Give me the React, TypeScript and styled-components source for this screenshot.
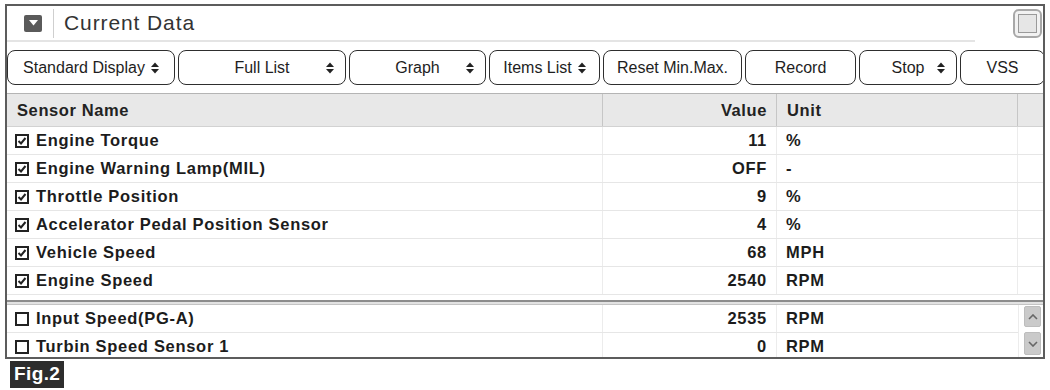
import styled, { createGlobalStyle } from "styled-components";

type Sensor = {
  name: string;
  value: string;
  unit: string;
  checked: boolean;
};

type Tool = {
  label: string;
  width: number;
  kind: "plain" | "inline" | "spread";
};

const tools: Tool[] = [
  { label: "Standard Display", width: 168, kind: "inline" },
  { label: "Full List", width: 168, kind: "spread" },
  { label: "Graph", width: 137, kind: "spread" },
  { label: "Items List", width: 111, kind: "inline" },
  { label: "Reset Min.Max.", width: 139, kind: "plain" },
  { label: "Record", width: 111, kind: "plain" },
  { label: "Stop", width: 98, kind: "spread" },
  { label: "VSS", width: 85, kind: "plain" },
];

const pinned: Sensor[] = [
  { name: "Engine Torque", value: "11", unit: "%", checked: true },
  { name: "Engine Warning Lamp(MIL)", value: "OFF", unit: "-", checked: true },
  { name: "Throttle Position", value: "9", unit: "%", checked: true },
  { name: "Accelerator Pedal Position Sensor", value: "4", unit: "%", checked: true },
  { name: "Vehicle Speed", value: "68", unit: "MPH", checked: true },
  { name: "Engine Speed", value: "2540", unit: "RPM", checked: true },
];

const others: Sensor[] = [
  { name: "Input Speed(PG-A)", value: "2535", unit: "RPM", checked: false },
  { name: "Turbin Speed Sensor 1", value: "0", unit: "RPM", checked: false },
];

const COLS = "596px 174px 241px 1fr";

const GlobalStyle = createGlobalStyle`
  * { box-sizing: border-box; }
  body {
    margin: 0;
    background: #fff;
    color: #222;
    font-family: "Liberation Sans", Arial, sans-serif;
  }
`;

const Page = styled.div`
  padding: 4px 0 0 5px;
`;

const Window = styled.div`
  width: 1040px;
  border: 2px solid #5c5c5c;
  display: flex;
  flex-direction: column;
`;

const TitleBar = styled.div`
  display: flex;
  align-items: flex-start;
  gap: 38px;
  height: 36px;
  padding-right: 1px;
`;

const TitleMain = styled.div`
  flex: 1;
  height: 36px;
  display: flex;
  align-items: center;
  border-bottom: 2px solid #e4e4e4;
  padding-left: 17px;
`;

const CollapseIcon = styled.div`
  width: 18px;
  height: 17px;
  background: #5a5a5a;
  border-radius: 2px;
  display: flex;
  align-items: center;
  justify-content: center;
`;

const TitleDivider = styled.div`
  width: 1px;
  height: 29px;
  background: #cfcfcf;
  margin: 0 10px 0 11px;
`;

const TitleText = styled.div`
  font-size: 21px;
  letter-spacing: 0.9px;
  color: #333;
`;

const MaxButton = styled.div`
  width: 29px;
  height: 29px;
  margin-top: 3px;
  border: 2px solid #a8a8a8;
  border-radius: 6px;
  padding: 3px;
  background: #f2f2f2;
`;

const MaxInner = styled.div`
  width: 100%;
  height: 100%;
  border: 1px solid #9a9a9a;
  background: #e6e6e6;
`;

const Toolbar = styled.div`
  display: flex;
  gap: 3px;
  padding: 8px 0;
  overflow: hidden;
`;

const ToolButton = styled.div<{ $w: number; $kind: Tool["kind"] }>`
  flex: none;
  width: ${(p) => p.$w}px;
  height: 35px;
  border: 1.5px solid #2e2e2e;
  border-radius: 8px;
  background: #fff;
  font-size: 16px;
  color: #1e1e1e;
  white-space: nowrap;
  align-items: center;
  ${(p) =>
    p.$kind === "spread"
      ? `display: grid; grid-template-columns: 1fr auto 1fr; padding: 0 11px;`
      : `display: flex; justify-content: center; gap: 6px;`}
`;

const SpinSlot = styled.span`
  justify-self: end;
  display: flex;
`;

const Table = styled.div`
  border-top: 1px solid #b4b4b4;
`;

const HeaderRow = styled.div`
  display: grid;
  grid-template-columns: ${COLS};
  height: 33px;
  background: #e8e8e8;
  border-bottom: 1px solid #d2d2d2;
`;

const HeadCell = styled.div<{ $align?: "left" | "right" }>`
  display: flex;
  align-items: center;
  justify-content: ${(p) => (p.$align === "right" ? "flex-end" : "flex-start")};
  padding: 0 9px 0 ${(p) => (p.$align === "right" ? "0" : "10px")};
  border-right: 1px solid #c6c6c6;
  font-weight: bold;
  font-size: 16.5px;
  letter-spacing: 0.6px;
  &:last-child { border-right: none; }
`;

const TopPane = styled.div`
  height: 173px;
`;

const PaneSplit = styled.div`
  height: 5px;
  border-top: 2px solid #8c8c8c;
  background: #e2e2e2;
  border-bottom: 1px solid #c4c4c4;
`;

const BottomPane = styled.div`
  height: 52px;
  display: flex;
  overflow: hidden;
`;

const BottomRows = styled.div`
  width: 1011px;
`;

const DataRow = styled.div<{ $cols: string }>`
  display: grid;
  grid-template-columns: ${(p) => p.$cols};
  height: 28px;
  border-bottom: 1px solid #e6e6e6;
`;

const Cell = styled.div<{ $align?: "left" | "right" }>`
  display: flex;
  align-items: center;
  justify-content: ${(p) => (p.$align === "right" ? "flex-end" : "flex-start")};
  padding: 0 9px 0 ${(p) => (p.$align === "right" ? "0" : "9px")};
  border-right: 1px solid #ececec;
  font-weight: bold;
  font-size: 16.5px;
  letter-spacing: 0.7px;
  color: #1c1c1c;
  white-space: nowrap;
  &:last-child { border-right: none; }
`;

const NameCell = styled(Cell)`
  padding-left: 8px;
  gap: 7px;
`;

const CheckBox = styled.span`
  width: 14px;
  height: 14px;
  border: 2px solid #222;
  display: flex;
  align-items: center;
  justify-content: center;
  flex: none;
`;

const ScrollCol = styled.div`
  flex: 1;
  border-left: 1px solid #ececec;
  display: flex;
  flex-direction: column;
  gap: 5px;
  padding: 1px 2px 0 5px;
`;

const ScrollButton = styled.div<{ $h: number }>`
  height: ${(p) => p.$h}px;
  background: #cacaca;
  border: 1px solid #bdbdbd;
  border-radius: 2px;
  display: flex;
  align-items: center;
  justify-content: center;
`;

const FigLabel = styled.div`
  display: inline-block;
  margin: 2px 0 0 5px;
  padding: 2px 4px 0;
  height: 27px;
  background: #2d2d2d;
  color: #fff;
  font-weight: bold;
  font-size: 19px;
  letter-spacing: 0.4px;
`;

const SpinArrows = () => (
  <svg width="8" height="12" viewBox="0 0 8 12">
    <polygon points="0,5 4,0.5 8,5" fill="#222" />
    <polygon points="0,7 4,11.5 8,7" fill="#222" />
  </svg>
);

const Check = () => (
  <svg width="10" height="10" viewBox="0 0 10 10">
    <polyline points="1.5,5 4,7.5 8.5,2" fill="none" stroke="#222" strokeWidth="2" />
  </svg>
);

const SensorRow = ({ s, cols }: { s: Sensor; cols: string }) => (
  <DataRow $cols={cols}>
    <NameCell>
      <CheckBox>{s.checked && <Check />}</CheckBox>
      {s.name}
    </NameCell>
    <Cell $align="right">{s.value}</Cell>
    <Cell>{s.unit}</Cell>
    {cols === COLS && <Cell />}
  </DataRow>
);

const App = () => {
  return (
    <Page>
      <GlobalStyle />
      <Window>
        <TitleBar>
          <TitleMain>
            <CollapseIcon>
              <svg width="9" height="6" viewBox="0 0 9 6">
                <polygon points="0,0 9,0 4.5,5.5" fill="#fff" />
              </svg>
            </CollapseIcon>
            <TitleDivider />
            <TitleText>Current Data</TitleText>
          </TitleMain>
          <MaxButton>
            <MaxInner />
          </MaxButton>
        </TitleBar>

        <Toolbar>
          {tools.map((t) => (
            <ToolButton key={t.label} $w={t.width} $kind={t.kind}>
              {t.kind === "spread" && <span />}
              <span>{t.label}</span>
              {t.kind === "inline" && <SpinArrows />}
              {t.kind === "spread" && (
                <SpinSlot>
                  <SpinArrows />
                </SpinSlot>
              )}
            </ToolButton>
          ))}
        </Toolbar>

        <Table>
          <HeaderRow>
            <HeadCell>Sensor Name</HeadCell>
            <HeadCell $align="right">Value</HeadCell>
            <HeadCell>Unit</HeadCell>
            <HeadCell />
          </HeaderRow>
          <TopPane>
            {pinned.map((s) => (
              <SensorRow key={s.name} s={s} cols={COLS} />
            ))}
          </TopPane>
          <PaneSplit />
          <BottomPane>
            <BottomRows>
              {others.map((s) => (
                <SensorRow key={s.name} s={s} cols="596px 174px 241px" />
              ))}
            </BottomRows>
            <ScrollCol>
              <ScrollButton $h={21}>
                <svg width="10" height="6" viewBox="0 0 10 6">
                  <polyline points="1,5 5,1 9,5" fill="none" stroke="#666" strokeWidth="1.6" />
                </svg>
              </ScrollButton>
              <ScrollButton $h={23}>
                <svg width="10" height="6" viewBox="0 0 10 6">
                  <polyline points="1,1 5,5 9,1" fill="none" stroke="#666" strokeWidth="1.6" />
                </svg>
              </ScrollButton>
            </ScrollCol>
          </BottomPane>
        </Table>
      </Window>
      <FigLabel>Fig.2</FigLabel>
    </Page>
  );
};

export default App;
